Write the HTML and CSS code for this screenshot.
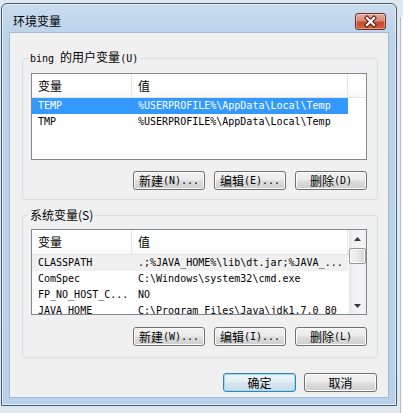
FILE: index.html
```html
<!DOCTYPE html>
<html lang="zh-CN">
<head>
<meta charset="utf-8">
<title>环境变量</title>
<link rel="stylesheet" href="styles.css">
</head>
<body>
<div class="screen">
  <div class="main-row">
    <div class="window">
      <div class="titlebar">
        <span class="title">环境变量</span>
        <button class="close" aria-label="关闭">
          <svg width="29" height="15" viewBox="0 0 29 15">
            <path d="M11 4 L18 11 M18 4 L11 11" stroke="#4a1c12" stroke-width="4.2" stroke-linecap="square" fill="none"/>
            <path d="M11 4 L18 11 M18 4 L11 11" stroke="#ffffff" stroke-width="2.2" stroke-linecap="square" fill="none"/>
          </svg>
        </button>
      </div>
      <div class="client">
        <fieldset class="group group-user">
          <legend class="group-label"><span class="m">bing </span>的用户变量<span class="m">(U)</span></legend>
          <div class="listbox list-user">
            <div class="lv-body">
              <div class="lv-header">
                <div class="hcol c1">变量</div>
                <div class="hcol c2">值</div>
                <div class="hcol rest"></div>
              </div>
              <div class="lv-row selected">
                <div class="cell c1">TEMP</div>
                <div class="cell c2">%USERPROFILE%\AppData\Local\Temp</div>
              </div>
              <div class="lv-row">
                <div class="cell c1">TMP</div>
                <div class="cell c2">%USERPROFILE%\AppData\Local\Temp</div>
              </div>
            </div>
          </div>
          <div class="btn-row">
            <button class="btn">新建<span class="m">(N)...</span></button>
            <button class="btn">编辑<span class="m">(E)...</span></button>
            <button class="btn">删除<span class="m">(D)</span></button>
          </div>
        </fieldset>

        <fieldset class="group group-sys">
          <legend class="group-label label-ui">系统变量(S)</legend>
          <div class="listbox list-sys">
            <div class="lv-body">
              <div class="lv-header">
                <div class="hcol c1">变量</div>
                <div class="hcol c2">值</div>
                <div class="hcol rest"></div>
              </div>
              <div class="lv-row inactive-sel">
                <div class="cell c1">CLASSPATH</div>
                <div class="cell c2">.;%JAVA_HOME%\lib\dt.jar;%JAVA_...</div>
              </div>
              <div class="lv-row">
                <div class="cell c1">ComSpec</div>
                <div class="cell c2">C:\Windows\system32\cmd.exe</div>
              </div>
              <div class="lv-row">
                <div class="cell c1">FP_NO_HOST_C...</div>
                <div class="cell c2">NO</div>
              </div>
              <div class="lv-row">
                <div class="cell c1">JAVA_HOME</div>
                <div class="cell c2">C:\Program Files\Java\jdk1.7.0_80</div>
              </div>
            </div>
            <div class="vscroll">
              <div class="sb-btn">
                <svg width="7" height="4" viewBox="0 0 7 4"><path d="M0 4 L3.5 0 L7 4 Z" fill="#3a3a3a"/></svg>
              </div>
              <div class="sb-thumb"></div>
              <div class="sb-track"></div>
              <div class="sb-btn">
                <svg width="7" height="4" viewBox="0 0 7 4"><path d="M0 0 L3.5 4 L7 0 Z" fill="#3a3a3a"/></svg>
              </div>
            </div>
          </div>
          <div class="btn-row">
            <button class="btn">新建<span class="m">(W)...</span></button>
            <button class="btn">编辑<span class="m">(I)...</span></button>
            <button class="btn">删除<span class="m">(L)</span></button>
          </div>
        </fieldset>

        <div class="footer">
          <button class="btn btn-ui btn-default">确定</button>
          <button class="btn btn-ui">取消</button>
        </div>
      </div>
    </div>
    <div class="edge"><div class="edge-line"></div></div>
  </div>
  <div class="behind">
    <div class="behind-btn">确定</div>
    <div class="behind-btn">取消</div>
    <div class="behind-btn disabled">应用(A)</div>
  </div>
</div>
</body>
</html>
```
FILE: styles.css
```css
* { box-sizing: border-box; }

html, body {
  margin: 0;
  padding: 0;
}

body {
  width: 403px;
  height: 413px;
  overflow: hidden;
  background: #dfe7ef;
  font-family: "Noto Sans CJK SC", "Liberation Sans", sans-serif;
  font-size: 12px;
  color: #000;
}

.screen {
  width: 403px;
  height: 413px;
  display: flex;
  flex-direction: column;
}

.main-row {
  display: flex;
  padding-top: 3px;
}

/* ---------- window frame ---------- */
.window {
  margin-left: 1px;
  width: 396px;
  height: 403px;
  border: 1px solid #4c5c70;
  border-radius: 6px 6px 0 0;
  padding: 0 8px 8px 8px;
  background: linear-gradient(to bottom, #cadcef 0px, #bcd3ea 30px, #b9d1ea 100%);
  box-shadow: inset 0 0 0 1px rgba(255, 255, 255, 0.55);
  display: flex;
  flex-direction: column;
}

.titlebar {
  height: 29px;
  display: flex;
  justify-content: space-between;
  align-items: flex-start;
}

.title {
  margin-top: 9px;
  padding-left: 3px;
  line-height: 16px;
  font-size: 12px;
}

.close {
  margin-top: 9px;
  margin-right: 2px;
  width: 31px;
  height: 17px;
  padding: 0;
  border: 1px solid #6d2e24;
  border-radius: 3px;
  background: linear-gradient(to bottom, #e9aa9b 0%, #d98a78 45%, #c8492f 55%, #d0643f 100%);
  box-shadow: inset 0 0 0 1px rgba(255, 255, 255, 0.35);
  display: flex;
  align-items: center;
  justify-content: center;
}

.close svg { display: block; }

.client {
  height: 364px;
  background: #f0f0f0;
  box-shadow: 0 0 0 1px #a3b9d2;
  display: flex;
  flex-direction: column;
}

/* ---------- group boxes ---------- */
.group {
  min-width: 0;
  width: 356px;
  margin: 0 10px 0 12px;
  border: 1px solid #d5dfe5;
  border-radius: 3px;
  padding: 6px 10px 9px 8px;
}

.group-user { margin-top: 16px; }
.group-sys { margin-top: 7px; padding-bottom: 11px; }

.group-label {
  padding: 0 2px;
  margin-left: -3px;
  line-height: 16px;
  font-size: 12px;
}

.m {
  font-family: "DejaVu Sans Mono", "Liberation Mono", monospace;
  font-size: 10px;
}

/* ---------- list views ---------- */
.listbox {
  width: 336px;
  border: 1px solid #828790;
  background: #fff;
  display: flex;
  overflow: hidden;
}

.list-user { height: 87px; }
.list-sys { height: 86px; }

.lv-body {
  flex: 1;
  min-width: 0;
  display: flex;
  flex-direction: column;
  overflow: hidden;
}

.lv-header {
  height: 24px;
  flex: none;
  display: flex;
  border-bottom: 1px solid #e5e5e5;
  background: linear-gradient(to bottom, #ffffff 0%, #ffffff 60%, #f7f8f9 100%);
}

.list-sys .lv-header { height: 25px; }

.hcol {
  line-height: 23px;
  padding-left: 6px;
  font-size: 12px;
  border-right: 1px solid #e5e5e5;
}

.hcol.rest { flex: 1; border-right: none; padding: 0; }

.c1 { width: 100px; flex: none; }
.c2 { width: 216px; flex: none; }

.lv-row {
  height: 16px;
  flex: none;
  width: 316px;
  display: flex;
}

.cell {
  padding-left: 6px;
  white-space: nowrap;
  overflow: hidden;
  font-family: "DejaVu Sans Mono", "Liberation Mono", monospace;
  font-size: 10px;
  line-height: 16px;
}

.lv-row.selected { background: #3399ff; color: #fff; }
.lv-row.inactive-sel { background: #f0f0f0; }

/* ---------- scrollbar ---------- */
.vscroll {
  width: 17px;
  flex: none;
  display: flex;
  flex-direction: column;
  background: linear-gradient(to right, #e3e3e3 0%, #f0f0f0 20%, #f4f4f4 80%, #ededed 100%);
}

.sb-btn {
  height: 17px;
  flex: none;
  display: flex;
  align-items: center;
  justify-content: center;
}

.sb-btn svg { display: block; }

.sb-thumb {
  height: 16px;
  margin-top: 1px;
  flex: none;
  border: 1px solid #979797;
  border-radius: 2px;
  background: linear-gradient(to right, #f3f3f3 0%, #e8e8e8 50%, #d6d6d6 100%);
  box-shadow: inset 0 0 0 1px #fafafa;
}

.sb-track { flex: 1; }

/* ---------- buttons ---------- */
.btn-row {
  display: flex;
  justify-content: flex-end;
  gap: 9px;
  width: 336px;
  margin-top: 11px;
}

.group-sys .btn-row { margin-top: 12px; }

.btn {
  width: 72px;
  height: 19px;
  padding: 0;
  border: 1px solid #707070;
  border-radius: 3px;
  background: linear-gradient(to bottom, #f2f2f2 0%, #ebebeb 48%, #dddddd 52%, #cfcfcf 100%);
  box-shadow: inset 0 0 0 1px #fcfcfc;
  font-family: "Noto Sans CJK SC", sans-serif;
  font-size: 12px;
  line-height: 17px;
  color: #000;
  display: flex;
  align-items: center;
  justify-content: center;
  white-space: nowrap;
}

.footer {
  display: flex;
  justify-content: flex-end;
  gap: 8px;
  margin-top: 15px;
  padding-right: 11px;
}

.btn-ui { width: 73px; }

.btn-default {
  border-color: #3c7fb1;
  box-shadow: inset 0 0 0 1px #8fe0f8;
  background: linear-gradient(to bottom, #eef5f9 0%, #e3eef5 48%, #d6e6f0 52%, #c9dde9 100%);
}

/* ---------- things behind the window ---------- */
.edge {
  width: 6px;
  flex: none;
}

.edge-line {
  margin: 14px 0 0 3px;
  height: 400px;
  border-left: 1px solid #b4bcc6;
  background: #f7f7f7;
}

.behind {
  height: 7px;
  overflow: hidden;
  background: #f0f0f0;
  display: flex;
  padding-left: 165px;
  gap: 7px;
}

.behind-btn {
  width: 73px;
  height: 24px;
  margin-top: -4px;
  border: 1px solid #707070;
  border-radius: 3px;
  background: linear-gradient(to bottom, #f2f2f2, #e6e6e6);
  text-align: center;
  line-height: 22px;
  font-size: 12px;
}

.behind-btn.disabled {
  color: #8d8d8d;
  border-color: #adb2b5;
}
```
